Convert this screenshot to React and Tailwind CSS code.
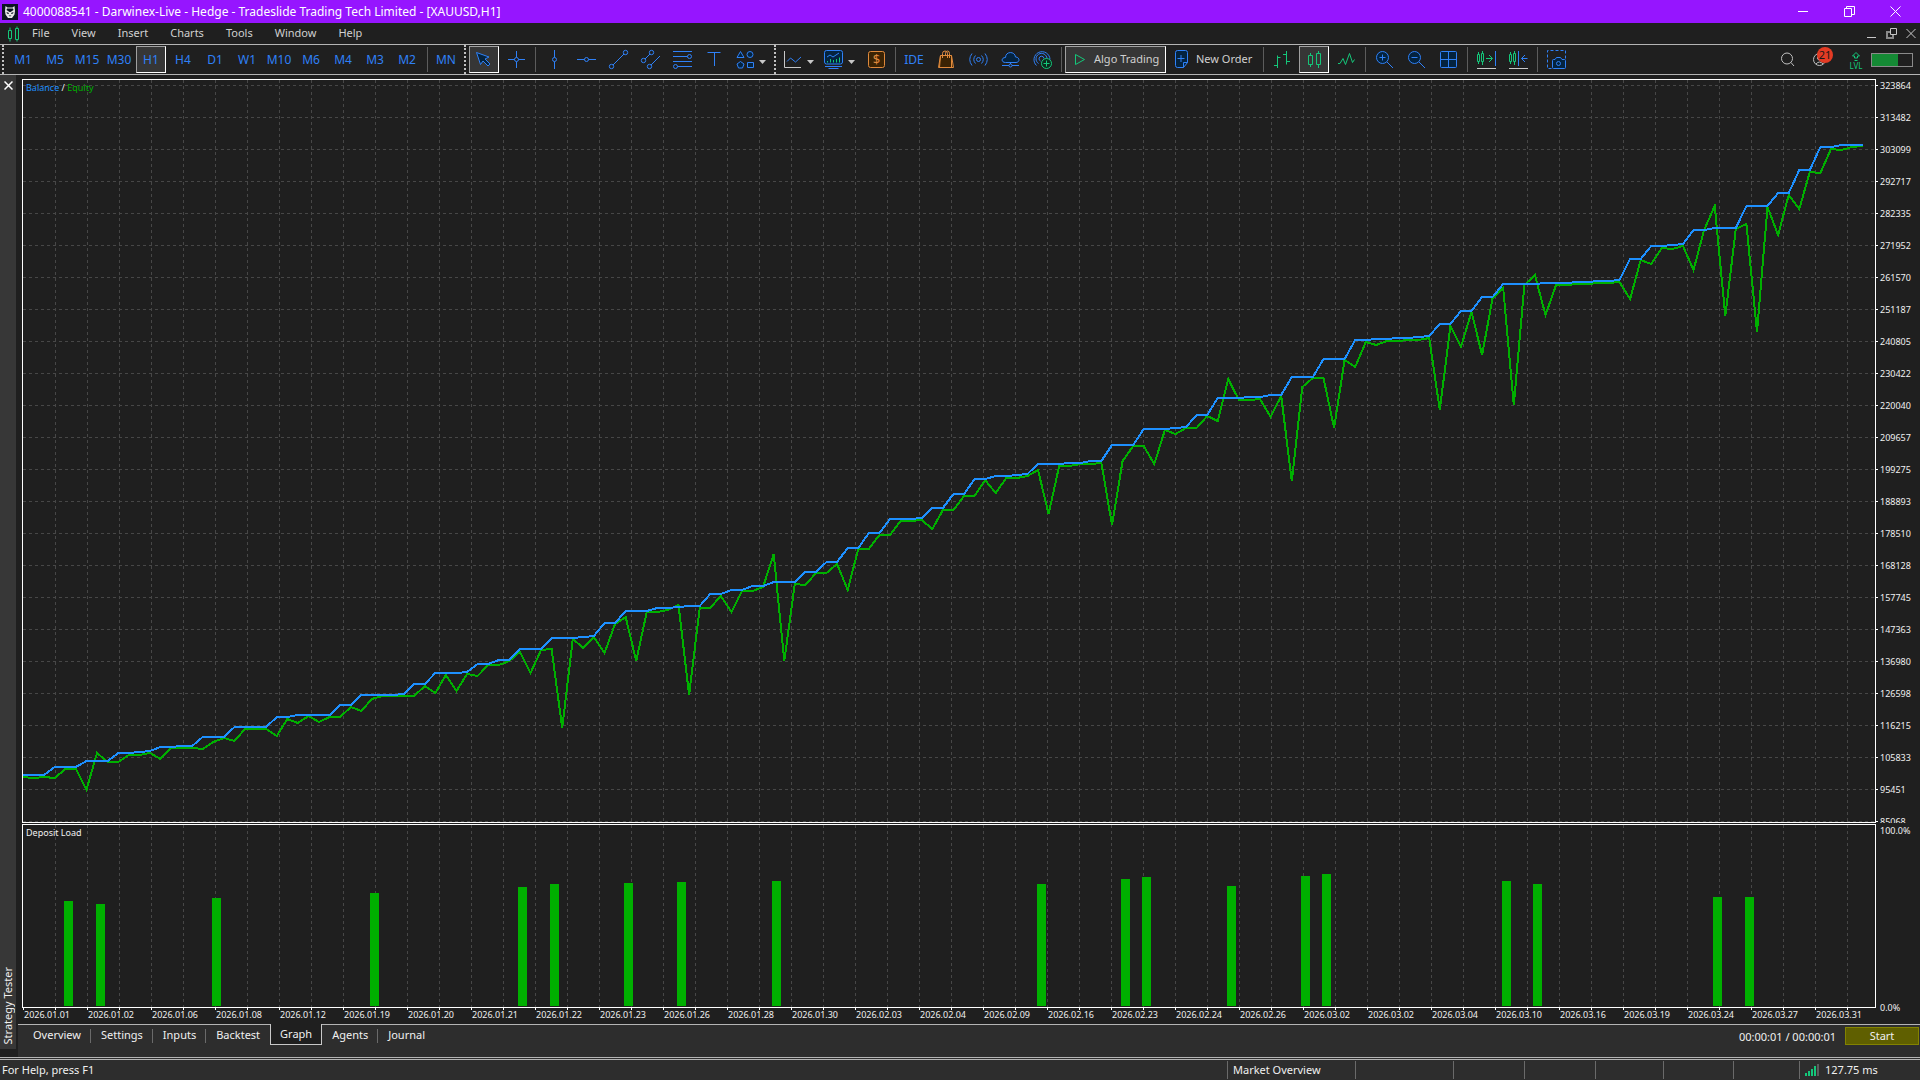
const BLUE = '#2f81f7'
const GREEN = '#14c77a'
const ORANGE = '#e08a3c'
const NAVY = '#04233f'

// Account curves, one value per deal, measured down from the top of the plot
const balance = [
  695, 695, 695, 687, 687, 687, 681, 681, 681, 673, 673, 672, 671, 667, 667, 666, 666, 657, 657, 657,
  647, 647, 647, 647, 637, 637, 635, 635, 635, 635, 625, 625, 615, 615, 615, 615, 614, 604, 604, 593,
  593, 593, 592, 584, 584, 580, 580, 569, 569, 569, 558, 558, 558, 557, 556, 543, 543, 531, 531, 531,
  528, 528, 527, 526, 526, 514, 514, 510, 510, 506, 506, 502, 502, 502, 492, 492, 482, 482, 468, 468,
  453, 453, 439, 439, 439, 438, 428, 428, 414, 414, 399, 399, 396, 396, 395, 394, 384, 384, 384, 383,
  383, 381, 381, 365, 365, 365, 349, 349, 349, 348, 347, 335, 335, 318, 318, 318, 317, 317, 315, 315,
  297, 297, 297, 279, 279, 279, 260, 260, 259, 259, 258, 258, 257, 256, 244, 244, 231, 231, 217, 217,
  204, 204, 204, 204, 203, 203, 203, 202, 202, 201, 201, 200, 179, 179, 166, 166, 165, 164, 150, 150,
  148, 148, 148, 126, 126, 126, 113, 113, 90, 90, 67, 67, 65, 65, 65,
]

const equity = [
  697, 698, 697, 698, 689, 689, 710, 673, 682, 682, 675, 675, 673, 679, 668, 668, 668, 669, 662, 658,
  661, 649, 649, 649, 656, 639, 643, 636, 642, 637, 637, 627, 631, 619, 616, 616, 616, 616, 606, 613,
  595, 611, 594, 596, 585, 585, 581, 572, 593, 570, 569, 648, 559, 568, 557, 573, 544, 537, 581, 532,
  532, 530, 525, 615, 528, 528, 516, 532, 511, 511, 507, 474, 581, 504, 505, 493, 493, 484, 510, 469,
  469, 455, 455, 441, 441, 440, 449, 430, 430, 416, 416, 400, 413, 398, 398, 396, 390, 434, 386, 386,
  384, 384, 383, 445, 381, 366, 366, 384, 350, 354, 348, 348, 336, 341, 299, 320, 320, 319, 337, 316,
  401, 307, 298, 298, 348, 280, 287, 262, 265, 261, 261, 260, 260, 258, 330, 246, 267, 232, 275, 218,
  208, 325, 205, 195, 235, 205, 205, 204, 204, 203, 203, 202, 219, 180, 184, 168, 169, 166, 190, 150,
  126, 236, 149, 144, 252, 127, 155, 115, 129, 92, 93, 69, 70, 67, 66,
]

// [deal index, bar height]
const loads = [
  [4, 105], [7, 102], [18, 108], [33, 113], [47, 119], [50, 122], [57, 123], [62, 124], [71, 125], [96, 122],
  [104, 127], [106, 129], [114, 120], [121, 130], [123, 132], [140, 125], [143, 122], [160, 109], [163, 109],
]

const levels = [
  323864, 313482, 303099, 292717, 282335, 271952, 261570, 251187, 240805, 230422, 220040, 209657,
  199275, 188893, 178510, 168128, 157745, 147363, 136980, 126598, 116215, 105833, 95451, 85068,
]

const dates = [
  '01.01', '01.02', '01.06', '01.08', '01.12', '01.19', '01.20', '01.21', '01.22', '01.23', '01.26', '01.28', '01.30', '02.03', '02.04',
  '02.09', '02.16', '02.23', '02.24', '02.26', '03.02', '03.02', '03.04', '03.10', '03.16', '03.19', '03.24', '03.27', '03.31',
]

const STEP = 10.573
const toPoints = (values) => values.map((y, i) => `${(i * STEP).toFixed(1)},${y}`).join(' ')

function Icon({ children, color = BLUE, fill = 'none' }) {
  return (
    <svg viewBox="-12 -12 24 25" className="w-6 h-[25px] shrink-0" fill={fill} stroke={color} strokeWidth="1" aria-hidden="true">
      {children}
    </svg>
  )
}

const Caret = () => <svg viewBox="0 0 7 4" className="w-[7px] h-1 shrink-0 mt-1" fill="#c8c8c8" aria-hidden="true"><path d="M0 0h7L3.5 4z" /></svg>

const Sep = () => <div className="w-[6px] shrink-0 flex justify-center"><div className="w-px h-[25px] bg-[#5c5c5c]" /></div>

const Grip = () => <div className="w-[6px] shrink-0 flex justify-center self-stretch"><div className="border-l-2 border-dotted border-[#c0c0c0]" /></div>

function Tool({ label, active, children }) {
  return (
    <button aria-label={label} aria-pressed={active} className={`w-[30px] mx-px h-[27px] shrink-0 flex items-center justify-center border ${active ? 'bg-[#363636] border-t-[#a0a0a0] border-l-[#a0a0a0] border-b-white border-r-white' : 'border-transparent'}`}>
      {children}
    </button>
  )
}

function MenuTool({ label, wide, children }) {
  return (
    <button aria-label={label} className={`${wide ? 'w-[42px]' : 'w-[41px]'} h-[27px] pl-[2px] shrink-0 flex items-center gap-[3px]`}>
      {children}
      <Caret />
    </button>
  )
}

function TitleBar() {
  return (
    <header className="h-[23px] shrink-0 bg-[#9615ff] text-white flex items-center pl-[2px]">
      <svg viewBox="0 0 16 16" className="size-4 shrink-0" aria-hidden="true">
        <path fill="#0b1420" d="M0 0h16v16H0z" />
        <path fill="#e8e8e8" d="M3.500 2l2 1.500h5l2-1.500.5 5-.5 3.500L10 14H6l-2.500-3.500L3 7z" />
        <path fill="#0b1420" d="M5 4.500h6l.5 1.500L8.500 8h-1L4.500 6zM4.500 8l2.500 1-.5 1-1.500-.5zM11.500 8L9 9l.5 1 1.500-.5zM6.500 11.500h3L8 12.500z" />
      </svg>
      <h1 className="text-[12px] leading-4 pl-[5px] flex-1 whitespace-nowrap">4000088541 - Darwinex-Live - Hedge - Tradeslide Trading Tech Limited - [XAUUSD,H1]</h1>
      <div className="flex text-white">
        <button aria-label="Minimize" className="w-[46px] flex justify-center"><svg viewBox="0 0 11 11" className="size-[11px]" stroke="currentColor" fill="none"><path d="M0 5.500h10" /></svg></button>
        <button aria-label="Restore" className="w-[46px] flex justify-center"><svg viewBox="0 0 11 11" className="size-[11px]" stroke="currentColor" fill="none"><path d="M.5 2.500h7v8h-7zM2.500 2.500v-2h8v8h-3" /></svg></button>
        <button aria-label="Close" className="w-[46px] flex justify-center"><svg viewBox="0 0 11 11" className="size-[11px]" stroke="currentColor" fill="none"><path d="M.5.5l10 10M10.500.5l-10 10" /></svg></button>
        <div className="w-[2px]" />
      </div>
    </header>
  )
}

function MenuBar() {
  return (
    <nav className="h-[21px] shrink-0 flex items-center pl-2 pr-1 text-[11px] text-[#d0d0d0]">
      <svg viewBox="0 0 11 16" className="w-[11px] h-4 shrink-0 mr-[13px]" fill="none" stroke={GREEN} aria-hidden="true">
        <path d="M.5 4.500h3v8h-3zM2 1.500v3M2 12.500v3M7.500 2.500h3v11h-3zM9 .5v2M9 13.500v2" />
      </svg>
      <div className="flex gap-[22px] flex-1">
        {['File', 'View', 'Insert', 'Charts', 'Tools', 'Window', 'Help'].map((m) => <button key={m}>{m}</button>)}
      </div>
      <div className="flex gap-[9px] text-[#c8c8c8]">
        <button aria-label="Minimize chart"><svg viewBox="0 0 10 11" className="w-[10px] h-[11px]" stroke="currentColor"><path d="M0 9.500h9" /></svg></button>
        <button aria-label="Restore chart"><svg viewBox="0 0 11 11" className="size-[11px]" stroke="currentColor" fill="none"><path stroke="#8a8a8a" strokeWidth="2" d="M4 4H1v6h6V7" /><path d="M4.500.5h6v6h-6z" /></svg></button>
        <button aria-label="Close chart"><svg viewBox="0 0 10 11" className="w-[10px] h-[11px]" stroke="currentColor"><path d="M.5 1l9 9M9.500 1l-9 9" /></svg></button>
      </div>
    </nav>
  )
}

function Toolbar() {
  return (
    <div className="h-[31px] shrink-0 flex items-center border-y border-[#b4b4b4] text-[12px] text-[#d0d0d0]">
      <Grip />
      <div className="w-px" />
      {['M1', 'M5', 'M15', 'M30', 'H1', 'H4', 'D1', 'W1', 'M10', 'M6', 'M4', 'M3', 'M2'].map((t) => (
        <Tool key={t} label={t} active={t === 'H1'}><span className="text-[#2f81f7]">{t}</span></Tool>
      ))}
      <div className="w-px" />
      <Sep />
      <Tool label="MN"><span className="text-[#2f81f7]">MN</span></Tool>
      <Grip />
      <Tool label="Cursor" active>
        <Icon fill={NAVY}><path d="M-7.500-6.500l4 12 2.500-3.500 5 5 2-2-5-5 4-2z" /></Icon>
      </Tool>
      <Tool label="Crosshair">
        <Icon><circle cx=".5" cy=".5" r="2" /><path d="M-8 .5h6.500M2.500.5H9M.5-8v6.500M.5 2.500V9" /></Icon>
      </Tool>
      <Sep />
      <Tool label="Vertical line">
        <Icon><circle cx=".5" cy=".5" r="2" /><path d="M.5-9v7.500M.5 2.500V10" /></Icon>
      </Tool>
      <Tool label="Horizontal line">
        <Icon><circle cx=".5" cy=".5" r="2" /><path d="M-9 .5h7.500M2.500.5H10" /></Icon>
      </Tool>
      <Tool label="Trend line">
        <Icon><circle cx="7.500" cy="-6.500" r="2.200" /><circle cx="-6.500" cy="7.500" r="2.200" /><path d="M6-5L-5 6" /></Icon>
      </Tool>
      <Tool label="Channel">
        <Icon><circle cx="1.500" cy="-6.500" r="2.200" /><circle cx="-6.500" cy="1.500" r="2.200" /><circle cx="-.5" cy="7.500" r="2.200" /><path d="M0-5l-5 5M1 6l9-9" /></Icon>
      </Tool>
      <Tool label="Fibonacci">
        <Icon><circle cx="7.500" cy="-2.500" r="2" /><circle cx="-6.500" cy="7.500" r="2" /><path d="M-9-7.500h19M-9-2.500H5.500M-9 2.500h19M-4.500 7.500H10" /></Icon>
      </Tool>
      <Tool label="Text label">
        <Icon><path d="M-6.500-6.500h13M.5-6.500v13.500" /></Icon>
      </Tool>
      <MenuTool label="Objects" wide>
        <Icon fill={NAVY}><path d="M-7-1.500l3.500-6 3.500 6zM-3.500 2.500l3.500 2.500-1.500 4h-4L-7 5zM3.500 3.500h6v5h-6z" /><circle cx="6" cy="-4.500" r="3" /></Icon>
      </MenuTool>
      <Grip />
      <MenuTool label="Line studies">
        <Icon><path stroke="#c8c8c8" d="M-7.500-8V8.500H9" /><path d="M-5 2.500l3.500-3.500L3.500 3 9-2" /></Icon>
      </MenuTool>
      <MenuTool label="Indicators">
        <Icon>
          <rect x="-8.500" y="-8.500" width="18" height="13.500" rx="2" fill={NAVY} />
          <path d="M-6-2l3-2 3 2 6-4M-8 7.500H9M-4.500 9.500h10" />
          <path stroke={GREEN} d="M-5.500 3.500V2M-2.500 3.500V0M.5 3.500V1M3.500 3.500V0M6.500 3.500v-5" />
        </Icon>
      </MenuTool>
      <Tool label="Symbols">
        <Icon color={ORANGE}>
          <rect x="-7.500" y="-7.500" width="16" height="16" rx="2" fill="#3b2304" />
          <text x=".5" y="5" textAnchor="middle" fontSize="13" stroke="none" fill={ORANGE}>$</text>
        </Icon>
      </Tool>
      <Sep />
      <Tool label="IDE"><span className="text-[#2f81f7]">IDE</span></Tool>
      <Tool label="Market">
        <Icon color={ORANGE}><path fill="#3b2304" d="M-5.500-3.500h11l2 12h-15z" /><path d="M-5.500-3.500l-1 12M5.500-3.500v12M-3.500-1v-4.500q0-2.500 2.500-2.500t2.500 2.500V-1M-.5-3.500v-2q0-2.500 2-2.500t2 2.500V-1" /></Icon>
      </Tool>
      <Tool label="Signals">
        <Icon><circle cx=".5" cy=".5" r="2" /><path d="M-2.500-3.500q-3.500 4 0 8M3.500-3.500q3.500 4 0 8M-6-5.500q-4.500 6 0 12M7-5.500q4.500 6 0 12" /></Icon>
      </Tool>
      <Tool label="VPS">
        <Icon><path fill={NAVY} d="M-4.500 3.500C-9 3.500-9-1.500-4.500-1.500-4.500-8 5-8 5.500-2 10-2 10 3.500 6 3.500z" /><circle cx=".5" cy="6.500" r="1.500" /><path d="M-8 6.500h7M2 6.500h7M.5 3.500V5" /></Icon>
      </Tool>
      <Tool label="Copy trading">
        <Icon><path d="M-5.500 6.500a8 8 0 1 1 13.500-6M-3.500 4.500a5.500 5.500 0 1 1 8.500-5M-1.500 2a2.500 2.500 0 1 1 3.500-2.500" /><circle cx="4.500" cy="4.500" r="5" stroke={GREEN} fill="#0a2a1c" /><path stroke={GREEN} d="M1.500 4.500h6M4.500 1.500v6" /></Icon>
      </Tool>
      <Sep />
      <button aria-pressed="true" className="h-[27px] w-[101px] mx-px shrink-0 flex items-center pl-1 bg-[#363636] border border-t-[#a0a0a0] border-l-[#a0a0a0] border-b-white border-r-white text-[11px] whitespace-nowrap">
        <Icon color={GREEN}><path d="M-6.500-4.500l9 5-9 5z" /></Icon>Algo Trading
      </button>
      <button className="h-[27px] w-[93px] pl-[3px] gap-[2px] shrink-0 flex items-center text-[11px] whitespace-nowrap">
        <Icon><path fill={NAVY} d="M-5.500-8.500h8q2 0 2 2v10l-4 5h-6q-2 0-2-2v-13q0-2 2-2z" transform="translate(1)" /><path d="M5.500 3.500h-4v5M-4.500-.5h7M-1-4v7" /></Icon>New Order
      </button>
      <Sep />
      <Tool label="Bar chart">
        <Icon color={GREEN}><path d="M-4.500-3.500V9M-8 6.500h3.500M-4.500-1.500h3M4.500-8V5.500M1-4.500h3.500M4.500 2.500H8" /></Icon>
      </Tool>
      <Tool label="Candlesticks" active>
        <Icon color={GREEN}><path d="M-5.500-3.500h4v9h-4zM-3.500-6v2.500M-3.500 5.500V8M2.500-5.500h4v11h-4zM4.500-8v2.500M4.500 5.500V9" /></Icon>
      </Tool>
      <Tool label="Line chart">
        <Icon color={GREEN}><path d="M-8 4.500h2L-3-.5-.5 5.500l4-11 3 9L8.500.5" /></Icon>
      </Tool>
      <Sep />
      <Tool label="Zoom in">
        <Icon><circle cx="-1.500" cy="-1.500" r="6" fill={NAVY} /><path d="M-4.500-1.500h6M-1.500-4.500v6M3 3l6 6" /></Icon>
      </Tool>
      <Tool label="Zoom out">
        <Icon><circle cx="-1.500" cy="-1.500" r="6" fill={NAVY} /><path d="M-4.500-1.500h6M3 3l6 6" /></Icon>
      </Tool>
      <Tool label="Tile windows">
        <Icon><rect x="-7.500" y="-7.500" width="16" height="16" rx="1" fill={NAVY} /><path d="M.5-7.500v16M-7.500.5h16" /></Icon>
      </Tool>
      <Sep />
      <Tool label="Chart shift">
        <Icon><path stroke={GREEN} d="M-8.500-4.500h2v7h-2zM-7.500-7v2.500M-7.500 2.500V5M-4.500-5.500h2v8h-2zM-3.500-8v2.500M-3.500 2.500V6M0-.5h6M3-4l3.500 3.500L3 3" /><path d="M9.500-8V7" /><path stroke="#c8c8c8" d="M-9 9.500h19" /></Icon>
      </Tool>
      <Tool label="Auto scroll">
        <Icon><path stroke={GREEN} d="M-8.500-4.500h2v7h-2zM-7.500-7v2.500M-7.500 2.500V5M-4.500-5.500h2v8h-2zM-3.500-8v2.500M-3.500 2.500V6" /><path d="M.5-8V7M3.500-.5h6M7-4L3.500-.5 7 3" /><path stroke="#c8c8c8" d="M-9 9.500h19" /></Icon>
      </Tool>
      <Sep />
      <Tool label="Screenshot">
        <Icon><path strokeDasharray="3 2" d="M-4.500 9.500h-4v-18h18v8" /><path fill={NAVY} d="M-3.500 1.500q0-1 1-1h1.500l1.500-2h4l1.500 2h2.500q1 0 1 1v7q0 1-1 1h-11q-1 0-1-1z" /><circle cx="2.500" cy="4.500" r="2" /></Icon>
      </Tool>
      <div className="flex-1" />
      <button aria-label="Search" className="w-8">
        <Icon color="#c0c0c0"><circle cx="3" cy="-.5" r="5.500" /><path d="M7 3.500L10 7" /></Icon>
      </button>
      <button aria-label="Notifications" className="w-9 mr-[7px] relative">
        <Icon color="#c0c0c0"><circle cx="3.500" cy=".5" r="6" /><circle cx="3.500" cy="-1" r="2" /><path d="M0 5q3.500-4 7 0" /></Icon>
        <span className="absolute left-[13px] top-0 size-4 rounded-full bg-[#e33b24] text-[#181818] text-[11px] leading-4 text-center">21</span>
      </button>
      <button aria-label="Level" className="w-[18px] mr-[6px] mt-[2px] flex flex-col items-center text-[#14c77a] text-[8px] leading-2">
        <svg viewBox="0 0 8 10" className="w-2 h-[10px]" fill="none" stroke="currentColor" aria-hidden="true"><path d="M4 .5l3.500 3.500h-2v2h-3V4h-2zM2.500 8.500h3" /></svg>
        LVL
      </button>
      <div className="w-[42px] h-[14px] mr-[7px] border border-[#8a8a8a]"><div className="w-[65%] h-full bg-[#158a35]" /></div>
    </div>
  )
}

function Grid({ rows }) {
  return (
    <g stroke="#474747" strokeDasharray="3 3">
      {Array.from({ length: 120 }).map((_, i) => <line key={i} x1={i * 32 + 32.5} x2={i * 32 + 32.5} y1="0" y2="100%" />)}
      {rows && Array.from({ length: 60 }).map((_, i) => <line key={i} x1="0" x2="100%" y1={i * 32 + 5.5} y2={i * 32 + 5.5} />)}
    </g>
  )
}

function EquityChart() {
  return (
    <div className="flex-1 min-h-0 flex">
      <div className="flex-1 min-w-0 border border-white relative">
        <svg className="absolute inset-0 size-full" shapeRendering="crispEdges" role="img" aria-label="Balance and equity">
          <Grid rows />
          <svg width="100%" height="100%" viewBox="0 0 1852 742" preserveAspectRatio="none" fill="none" strokeWidth="2">
            <polyline points={toPoints(equity)} stroke="#00b000" vectorEffect="non-scaling-stroke" />
            <polyline points={toPoints(balance)} stroke="#1e90ff" vectorEffect="non-scaling-stroke" />
          </svg>
        </svg>
        <p className="relative px-[3px] pt-[2px] text-[9px] leading-3"><span className="text-[#1e90ff]">Balance</span> / <span className="text-[#00b000]">Equity</span></p>
      </div>
      <div className="w-11 shrink-0 overflow-hidden">
        {levels.map((l) => (
          <div key={l} className="h-8 flex items-start">
            <span className="w-[2px] h-px mt-[6px] bg-white" />
            <span className="pl-[2px] text-[9px] leading-[14px]">{l}</span>
          </div>
        ))}
      </div>
    </div>
  )
}

function DepositLoad() {
  return (
    <div className="h-[184px] shrink-0 mt-px flex">
      <div className="flex-1 min-w-0 border border-white relative">
        <svg className="absolute inset-0 size-full" shapeRendering="crispEdges" role="img" aria-label="Deposit load">
          <Grid />
          <svg width="100%" height="100%" viewBox="0 0 1852 182" preserveAspectRatio="none" fill="#00b000">
            {loads.map(([i, h]) => <rect key={i} x={Math.floor(i * STEP - 1)} y={181 - h} width="9" height={h} />)}
          </svg>
        </svg>
        <p className="relative px-[3px] pt-[2px] text-[9px] leading-3">Deposit Load</p>
      </div>
      <div className="w-11 shrink-0 pl-1 flex flex-col justify-between text-[9px] leading-[13px]">
        <span>100.0%</span>
        <span className="-mb-[6px]">0.0%</span>
      </div>
    </div>
  )
}

function Dates() {
  return (
    <div className="h-4 shrink-0 mr-11 flex overflow-hidden text-[9px] leading-[10px]">
      {dates.map((d, i) => (
        <div key={i} className="w-16 shrink-0 pl-[2px]">
          <div className="flex -ml-px gap-[31px]"><span className="w-px h-[2px] bg-white" /><span className="w-px h-[2px] bg-white" /></div>
          2026.{d}
        </div>
      ))}
    </div>
  )
}

function Tabs() {
  return (
    <div className="h-[33px] shrink-0 flex border-t border-[#b4b4b4] bg-[#2d2d2d] text-[11px]">
      <div role="tablist" className="flex h-5 pl-[5px]">
        {['Overview', 'Settings', 'Inputs', 'Backtest', 'Graph', 'Agents', 'Journal'].map((t) => (
          <button
            key={t}
            role="tab"
            aria-selected={t === 'Graph'}
            className={t === 'Graph' ? 'px-[9px] -mt-px h-[21px] bg-[#1f1f1f] border border-t-0 border-[#c8c8c8] leading-5' : 'relative px-[10px] leading-[18px]'}
          >
            {t}
            {!['Backtest', 'Graph', 'Journal'].includes(t) && <span className="absolute right-0 top-1 h-[14px] w-px bg-[#6a6a6a]" />}
          </button>
        ))}
      </div>
      <div className="flex-1" />
      <span className="pr-[9px] leading-6">00:00:01 / 00:00:01</span>
      <button className="w-[74px] h-[18px] mt-[2px] mr-px bg-[#5f5f00] border border-[#828200] leading-4">Start</button>
    </div>
  )
}

function StatusBar() {
  return (
    <footer className="h-[23px] shrink-0 border-t border-[#b4b4b4] bg-[#2d2d2d] text-[11px] leading-[20px]">
      <div className="h-[22px] mt-px border-t border-[#b4b4b4] flex items-start">
        <span className="pl-[2px] flex-1">For Help, press F1</span>
        <div className="flex h-[18px] mt-px divide-x divide-[#6a6a6a] border-l border-[#6a6a6a] leading-[18px]">
          <span className="w-32 pl-[5px]">Market Overview</span>
          <span className="w-[98px]" />
          <span className="w-[71px]" />
          <span className="w-[71px]" />
          <span className="w-[68px]" />
          <span className="w-[70px]" />
          <span className="w-[66px]" />
          <span className="w-[120px] pl-[5px] flex gap-[6px]">
            <svg viewBox="0 0 14 12" className="w-[14px] h-3 mt-[3px]" fill={GREEN} aria-hidden="true">
              <path d="M0 9h2v3H0zM3 7h2v5H3zM6 5h2v7H6zM9 2h2v10H9z" />
              <path fill="#5c5c5c" d="M12 0h2v12h-2z" />
            </svg>
            127.75 ms
          </span>
        </div>
      </div>
    </footer>
  )
}

export default function App() {
  return (
    <div className="h-screen min-w-[1640px] flex flex-col overflow-hidden bg-[#1f1f1f] text-[#f0f0f0] font-['Noto_Sans','Open_Sans',sans-serif]">
      <TitleBar />
      <MenuBar />
      <Toolbar />
      <main className="flex-1 min-h-0 flex">
        <aside className="w-4 shrink-0 mb-2 bg-[#373737] flex flex-col items-center justify-between">
          <button aria-label="Close panel" className="mt-[6px]"><svg viewBox="0 0 9 9" className="size-[9px]" stroke="#fff" strokeWidth="1.500"><path d="M.5.5l8 8M8.500.5l-8 8" /></svg></button>
          <span className="rotate-180 [writing-mode:vertical-rl] text-[11px] leading-4 mb-[5px]">Strategy Tester</span>
        </aside>
        <div className="flex-1 min-w-0 flex flex-col pl-[2px]">
          <div className="flex-1 min-h-0 flex flex-col pl-1 pt-1">
            <EquityChart />
            <DepositLoad />
            <Dates />
          </div>
          <Tabs />
        </div>
      </main>
      <StatusBar />
    </div>
  )
}
